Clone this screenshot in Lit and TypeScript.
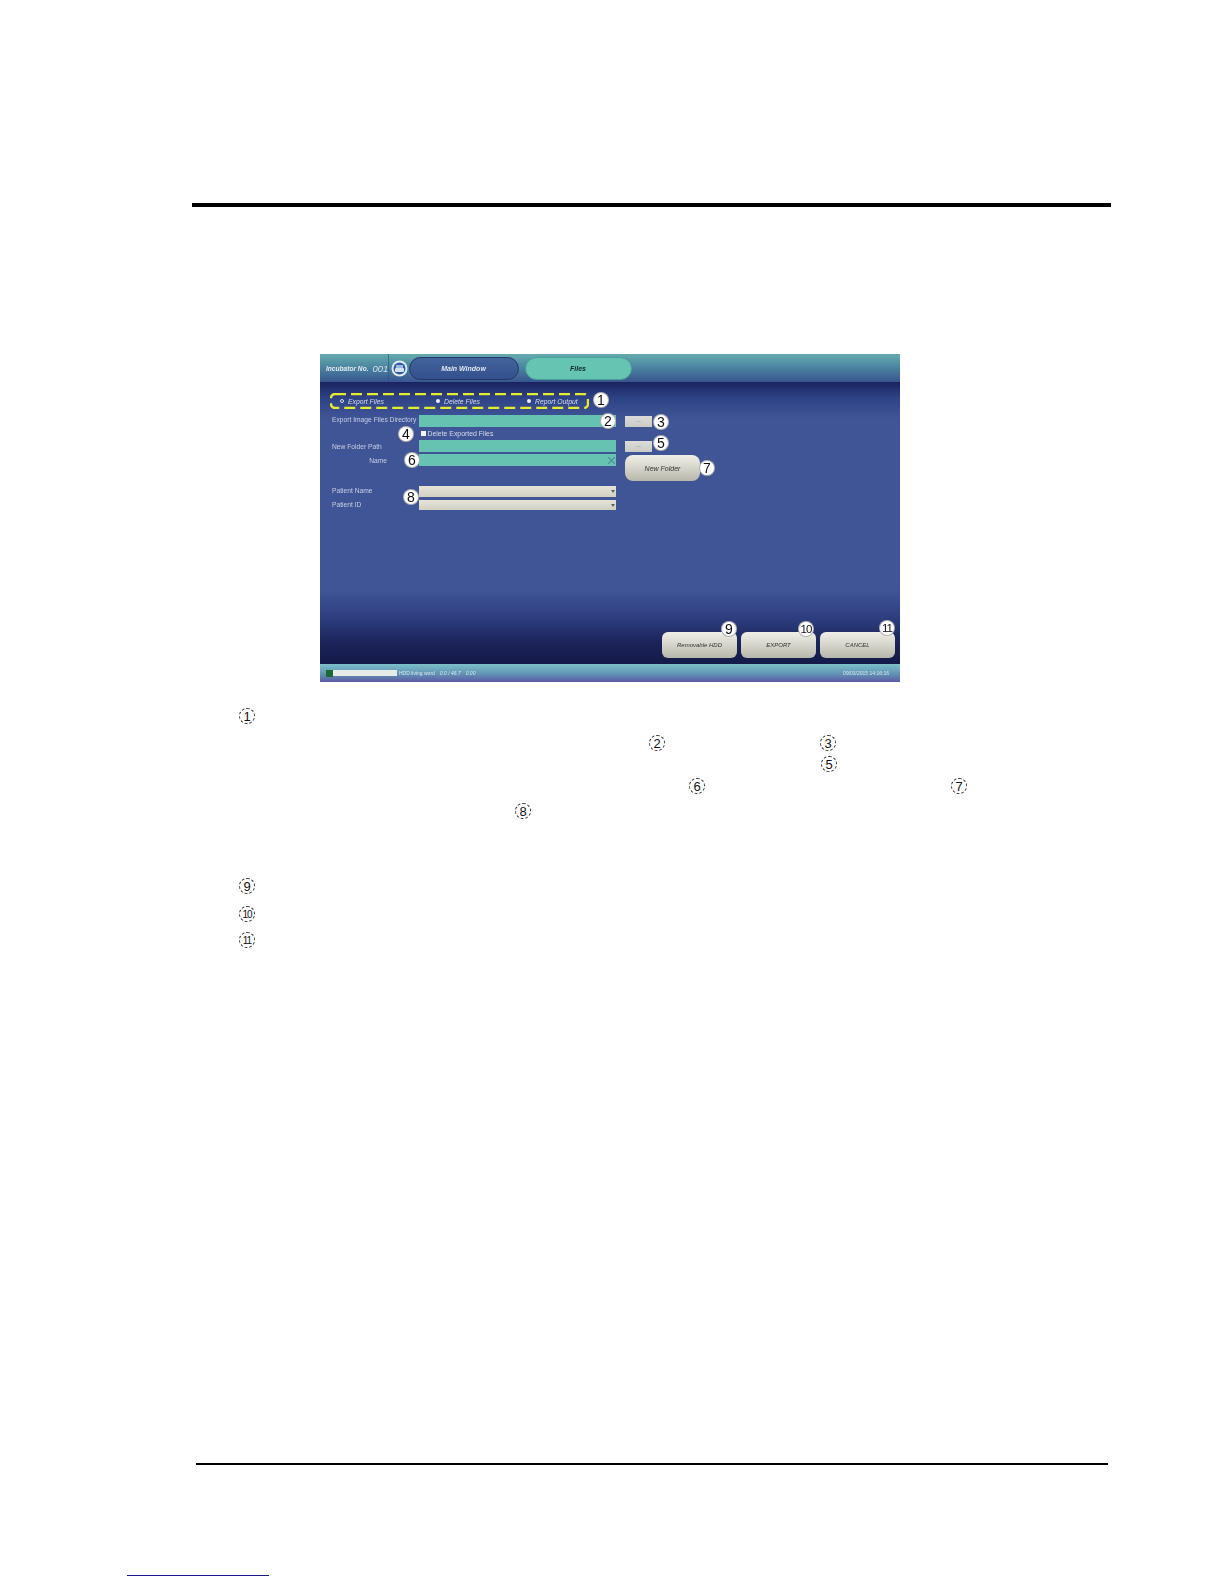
import { LitElement, html, css } from "lit";
import { customElement } from "lit/decorators.js";

const SHOT_X = 320;
const SHOT_Y = 354;

const shotMarks: { x: number; y: number; t: string }[] = [
  { x: 601, y: 400, t: "1" }, { x: 608, y: 421, t: "2" }, { x: 661, y: 422, t: "3" },
  { x: 406, y: 434, t: "4" }, { x: 661, y: 443, t: "5" }, { x: 412, y: 460, t: "6" },
  { x: 707, y: 468, t: "7" }, { x: 411, y: 497, t: "8" }, { x: 729, y: 629, t: "9" },
  { x: 806, y: 629, t: "10" }, { x: 887, y: 628, t: "11" },
];

const noteRows: { h: number; items: { x: number; t: string }[] }[] = [
  { h: 27, items: [{ x: 247, t: "1" }] },
  { h: 21, items: [{ x: 657, t: "2" }, { x: 828, t: "3" }] },
  { h: 22, items: [{ x: 829, t: "5" }] },
  { h: 25, items: [{ x: 697, t: "6" }, { x: 959, t: "7" }] },
  { h: 75, items: [{ x: 523, t: "8" }] },
  { h: 28, items: [{ x: 247, t: "9" }] },
  { h: 26, items: [{ x: 247, t: "10" }] },
  { h: 16, items: [{ x: 247, t: "11" }] },
];

@customElement("app-root")
export class AppRoot extends LitElement {
  static styles = css`
    :host { display: block; width: 1224px; height: 1584px; background: #fff; font-family: "Liberation Sans", Arial, sans-serif; overflow: hidden; }
    .page { display: flex; flex-direction: column; height: 1584px; }
    .top-rule { height: 4px; background: #000; margin: 203px 113px 0 192px; flex: none; }
    .shot-wrap { padding: 147px 0 0 320px; }
    .shot { position: relative; width: 580px; height: 328px; display: flex; flex-direction: column; color: #fff; filter: blur(0.35px); }

    .head { height: 28px; flex: none; display: flex; align-items: center; background: linear-gradient(#66abaf, #4c87a1 45%, #385590); }
    .ws { width: 69px; height: 28px; padding-left: 6px; box-sizing: border-box; font: italic bold 6.6px "Liberation Sans", sans-serif; white-space: nowrap; color: #e4ecf0; display: flex; align-items: center; gap: 4px; border-right: 1px solid rgba(40, 80, 130, .6); }
    .ws b { font: italic 9.5px "Liberation Sans", sans-serif; color: #cfe0ea; }
    .disc { width: 17px; height: 17px; margin: 0 -9px 0 1.5px; position: relative; z-index: 1; flex: none; }
    .disc + .tab { margin-left: 10px; }
    .tab { height: 23px; border-radius: 12px; box-sizing: border-box; display: flex; align-items: center; justify-content: center; font: italic bold 7px "Liberation Sans", sans-serif; }
    .tab.main { width: 110px; color: #dfe6f0; background: linear-gradient(#42639b, #34508e); border: 1px solid #22386b; }
    .tab.files { width: 107px; margin-left: 6px; color: #0f2a2a; background: #66c4b3; border: 1px solid #4a9e95; }

    .body { flex: 1; display: flex; flex-direction: column; padding: 11px 4px 6px 12px; box-sizing: border-box; background: linear-gradient(#1a2360 0, #2f4486 6%, #3f5596 13%, #3f5596 74%, #2c3d7e 84%, #1a2257 93%, #141b4a 100%); }

    .radios { position: relative; height: 16px; width: 259px; margin-left: -2px; box-sizing: border-box; padding-left: 10px; display: grid; grid-template-columns: 96px 91px auto; align-items: center; font: italic 6.8px "Liberation Sans", sans-serif; color: #d4dcec; }
    .dash { position: absolute; inset: 0; width: 100%; height: 100%; }
    .radio { display: flex; align-items: center; gap: 4px; position: relative; }
    .radio i { width: 4px; height: 4px; border-radius: 50%; background: #eef; display: block; }
    .radio i.off { background: none; border: 1px solid #dde; box-sizing: border-box; }

    .grid { margin-top: 6px; display: grid; grid-template-columns: 87px 197px 9px 27px auto; grid-template-rows: 12px 13px 12px 2px 12px 20px 11px 3px 10px; font-size: 6.7px; color: #c6cfe2; align-items: center; }
    .lbl { white-space: nowrap; grid-column: 1; }
    .lbl.first { margin-bottom: 4px; }
    .lbl.name { justify-self: end; margin-right: 32px; }
    .lbl.pat { margin-bottom: 2px; }
    .r1 { grid-row: 1; } .r2 { grid-row: 2; } .r3 { grid-row: 3; } .r5 { grid-row: 5; } .r7 { grid-row: 7; } .r9 { grid-row: 9; }
    .field { grid-column: 2; height: 12px; background: #66c2b1; position: relative; }
    .sel { grid-column: 2; height: 100%; background: linear-gradient(#e6e4d8, #d2d0c2); position: relative; }
    .sel::after { content: ""; position: absolute; right: 1px; top: 4px; border: 2.5px solid transparent; border-top: 3px solid #566; }
    .x { position: absolute; right: 1px; top: 2.5px; width: 7px; height: 7px; }
    .mini { grid-column: 4; height: 11px; background: linear-gradient(#dcdcd8, #cbcbc6); color: #667; font-size: 6px; text-align: center; line-height: 9px; }
    .chk { grid-column: 2; display: flex; align-items: center; gap: 2px; font-size: 6.9px; color: #d5dce9; }
    .chk i { width: 4.5px; height: 4.5px; background: #f3f3f3; display: block; margin-left: 2px; }
    .btn { border-radius: 6px; background: linear-gradient(#efefe8, #dadad0 40%, #b8b7ac); color: #333; font: italic 6px "Liberation Sans", sans-serif; display: flex; align-items: center; justify-content: center; box-sizing: border-box; }
    .newf { grid-column: 4 / 6; grid-row: 5 / 7; align-self: start; width: 75px; height: 26px; margin-top: 1px; font-size: 7px; border-radius: 8px; }

    .actions { margin-top: auto; align-self: flex-end; display: flex; gap: 4px; margin-right: 1px; }
    .actions .btn { width: 75px; height: 26px; }

    .foot { height: 18px; flex: none; background: linear-gradient(#7cc0c8, #6398b6 50%, #5a5aa5); display: flex; align-items: center; padding: 0 11px 0 6px; font-size: 5px; color: #d7e7ee; }
    .led { width: 7px; height: 7px; background: #1a6a35; }
    .bar { width: 64px; height: 6px; background: #e6ebe8; margin-right: 2px; }
    .foot .sp { flex: 1; }
    .foot .n { margin-left: 5px; font-style: italic; }

    .mark { position: absolute; width: 16px; height: 16px; margin: -8px 0 0 -8px; border-radius: 50%; background: #fff; color: #111; border: 1px solid rgba(0,0,0,.3); box-sizing: border-box; display: flex; align-items: center; justify-content: center; font: 14px "Liberation Sans", sans-serif; }
    .mark.two { font-size: 11.5px; letter-spacing: -1px; }

    .notes { padding-top: 26px; }
    .row { display: flex; align-items: flex-start; }
    .num { width: 16px; height: 16px; flex: none; border: 1px dashed #333; border-radius: 50%; box-sizing: border-box; display: flex; align-items: center; justify-content: center; font: 13px "Liberation Sans", sans-serif; color: #111; }
    .num.two { font-size: 10px; letter-spacing: -1px; }

    .fill { flex: 1; }
    .bottom-rule { height: 2px; background: #000; margin: 0 116px 0 196px; flex: none; }
    .link-rule { height: 1px; background: #1a1a8c; margin: 110px 955px 8px 127px; flex: none; }
  `;

  private renderRow(r: { h: number; items: { x: number; t: string }[] }) {
    let prevEnd = 0;
    return html`<div class="row" style="height:${r.h}px">
      ${r.items.map(i => {
        const gap = i.x - 8 - prevEnd;
        prevEnd = i.x + 8;
        return html`<div class="num ${i.t.length > 1 ? "two" : ""}" style="margin-left:${gap}px">${i.t}</div>`;
      })}
    </div>`;
  }

  render() {
    return html`<div class="page">
      <div class="top-rule"></div>
      <div class="shot-wrap">
        <div class="shot">
          <div class="head">
            <div class="ws">Incubator No. <b>001</b></div>
            <svg class="disc" viewBox="0 0 17 17"><circle cx="8.5" cy="8.5" r="8" fill="#e4eaf2"/><circle cx="8.5" cy="8.5" r="6" fill="#2f5aa8"/><rect x="5" y="5" width="7" height="3" fill="#9db8dc"/><rect x="4" y="8" width="9" height="4" rx="1" fill="#d3e2f2"/></svg>
            <div class="tab main">Main Window</div>
            <div class="tab files">Files</div>
          </div>
          <div class="body">
            <div class="radios">
              <svg class="dash" viewBox="0 0 259 16" fill="none"><rect x="1" y="1" width="257" height="14" rx="4" stroke="#e8ea2e" stroke-width="2.4" stroke-dasharray="11 5"/></svg>
              <div class="radio"><i class="off"></i>Export Files</div>
              <div class="radio"><i></i>Delete Files</div>
              <div class="radio"><i></i>Report Output</div>
            </div>
            <div class="grid">
              <div class="lbl first r1">Export Image Files Directory</div>
              <div class="field r1"></div>
              <div class="mini r1">...</div>
              <div class="chk r2"><i></i>Delete Exported Files</div>
              <div class="lbl r3">New Folder Path</div>
              <div class="field r3"></div>
              <div class="mini r3">...</div>
              <div class="lbl name r5">Name</div>
              <div class="field r5"><svg class="x" viewBox="0 0 7 7"><path d="M0 0L7 7M7 0L0 7" stroke="#4d8f96" stroke-width="1.2"/></svg></div>
              <div class="btn newf">New Folder</div>
              <div class="lbl pat r7">Patient Name</div>
              <div class="sel r7"></div>
              <div class="lbl pat r9">Patient ID</div>
              <div class="sel r9"></div>
            </div>
            <div class="actions">
              <div class="btn">Removable HDD</div>
              <div class="btn">EXPORT</div>
              <div class="btn">CANCEL</div>
            </div>
          </div>
          <div class="foot">
            <div class="led"></div><div class="bar"></div>
            <span>HDD living word</span><span class="n">0.0 / 46.7</span><span class="n">0.00</span>
            <span class="sp"></span><span>09/03/2015 14:16:16</span>
          </div>
          ${shotMarks.map(m => html`<div class="mark ${m.t.length > 1 ? "two" : ""}" style="left:${m.x - SHOT_X}px;top:${m.y - SHOT_Y}px">${m.t}</div>`)}
        </div>
      </div>
      <div class="notes">${noteRows.map(r => this.renderRow(r))}</div>
      <div class="fill"></div>
      <div class="bottom-rule"></div>
      <div class="link-rule"></div>
    </div>`;
  }
}
